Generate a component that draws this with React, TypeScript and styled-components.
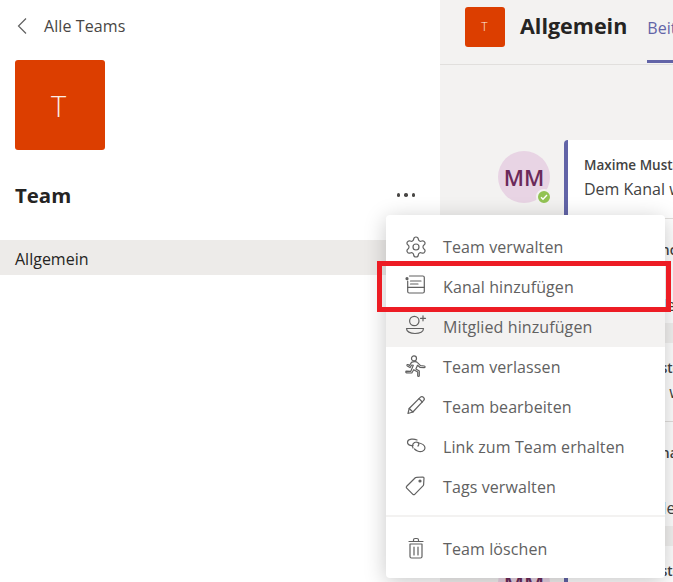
import React from 'react';
import styled, { createGlobalStyle } from 'styled-components';
import { Settings } from 'lucide-react';

const GlobalStyle = createGlobalStyle`
  html, body {
    margin: 0;
    padding: 0;
    overflow: hidden;
    background: #fff;
    font-family: "Open Sans", "Noto Sans", "Liberation Sans", sans-serif;
  }
  * { box-sizing: border-box; }
`;

const Page = styled.div`
  position: relative;
  display: flex;
  width: 673px;
  height: 582px;
  overflow: hidden;
`;

// left column
const Sidebar = styled.aside`
  display: flex;
  flex-direction: column;
  flex: 0 0 440px;
  background: #fff;
`;

const BackRow = styled.div`
  display: flex;
  align-items: center;
  gap: 14px;
  height: 50px;
  padding: 1px 0 0 14px;
  font-size: 16px;
  letter-spacing: 0.1px;
  color: #484644;
`;

const TeamTile = styled.div<{ $size: number; $font: number }>`
  display: flex;
  flex: 0 0 auto;
  align-items: center;
  justify-content: center;
  width: ${p => p.$size}px;
  height: ${p => p.$size}px;
  padding-right: ${p => p.$size / 30}px;
  border-radius: 3px;
  background: #dc3e00;
  color: #fdeee6;
  font-size: ${p => p.$font}px;
  font-weight: 300;
`;

const TileSlot = styled.div`
  padding: 10px 0 0 15px;
`;

const TitleRow = styled.div`
  display: flex;
  align-items: center;
  justify-content: space-between;
  height: 34px;
  margin-top: 28px;
  padding: 0 25px 0 15px;
`;

const TeamName = styled.h1`
  margin: 0;
  font-size: 20.4px;
  font-weight: 700;
  color: #252423;
`;

const Dots = styled.div`
  display: flex;
  gap: 4px;
`;

const Dot = styled.span`
  width: 3.5px;
  height: 3.5px;
  border-radius: 50%;
  background: #484644;
`;

const ChannelRow = styled.div`
  display: flex;
  align-items: center;
  height: 35px;
  margin-top: 28px;
  padding: 2px 0 0 15px;
  background: #edebe9;
  font-size: 16px;
  color: #252423;
`;

// right column
const Main = styled.main`
  flex: 1;
  min-width: 0;
  background: #f3f2f1;
  overflow: hidden;
`;

const Header = styled.header`
  display: flex;
  align-items: center;
  height: 65px;
  padding: 0 0 11px 25px;
  border-bottom: 1px solid #e1dfdd;
`;

const ChannelName = styled.h2`
  margin: -2px 0 0 15px;
  font-size: 21.5px;
  font-weight: 700;
  color: #252423;
`;

const Tab = styled.div`
  position: relative;
  margin: 3px 0 0 20px;
  font-size: 16px;
  white-space: nowrap;
  color: #6264a7;
  &::after {
    content: '';
    position: absolute;
    left: 0;
    right: 0;
    bottom: -24px;
    height: 3px;
    background: #6264a7;
  }
`;

const Feed = styled.div`
  display: flex;
  flex-direction: column;
  gap: 20px;
  width: 600px;
  padding: 75px 0 0 58px;
`;

const Post = styled.article`
  display: flex;
  align-items: flex-start;
  gap: 14px;
`;

const Avatar = styled.div`
  position: relative;
  display: flex;
  flex: 0 0 52px;
  align-items: center;
  justify-content: center;
  height: 52px;
  margin-top: 11px;
  border-radius: 50%;
  background: #e8d4e4;
  color: #6b2a5a;
  font-size: 22px;
  font-weight: 600;
`;

const Presence = styled.span`
  position: absolute;
  right: -2px;
  bottom: -2px;
  display: flex;
  align-items: center;
  justify-content: center;
  width: 16px;
  height: 16px;
  border: 2px solid #f3f2f1;
  border-radius: 50%;
  background: #92c353;
`;

const Card = styled.div`
  flex: 1;
  height: 183px;
  border-left: 4px solid #6264a7;
  border-radius: 4px 0 0 4px;
  background: #fff;
  color: #424242;
  white-space: nowrap;
`;

const Message = styled.div`
  height: 78px;
  padding: 16px 0 0 16px;
`;

const Reply = styled.div`
  height: 105px;
  padding: 22px 0 0 16px;
  border-top: 1px solid #e1dfdd;
`;

const Author = styled.div`
  font-size: 13.5px;
  font-weight: 600;
  line-height: 18px;
`;

const Body = styled.div`
  margin-top: 4px;
  font-size: 16px;
  line-height: 22px;
`;

const Note = styled(Body)`
  margin-top: 35px;
`;

// context menu lying over the page
const Menu = styled.nav`
  position: absolute;
  left: 386px;
  top: 215px;
  width: 279px;
  height: 363px;
  padding-top: 12px;
  border-radius: 4px;
  background: #fff;
  box-shadow: 0 4px 22px rgba(0, 0, 0, 0.22);
`;

const MenuItem = styled.div<{ $hover?: boolean }>`
  display: flex;
  align-items: center;
  gap: 15px;
  height: 40px;
  padding-left: 18px;
  background: ${p => (p.$hover ? '#f3f2f1' : 'transparent')};
  color: #616161;
  font-size: 16px;
  letter-spacing: 0.1px;
`;

const MenuDivider = styled.div`
  height: 2px;
  margin: 8px 0 12px;
  background: #f3f2f1;
`;

const Highlight = styled.div`
  position: absolute;
  left: -9px;
  top: 46px;
  width: 294px;
  height: 51px;
  border: 5px solid #ed1c24;
  pointer-events: none;
`;

const IconSvg = styled.svg.attrs({
  width: 24,
  height: 24,
  viewBox: '0 0 24 24',
  fill: 'none',
  stroke: '#616161',
  strokeWidth: 1.2,
  strokeLinecap: 'round',
  strokeLinejoin: 'round',
})`
  flex: 0 0 24px;
`;

const GearIcon = styled(Settings).attrs({ size: 24, strokeWidth: 1.2, color: '#616161' })`
  flex: 0 0 24px;
`;

const BackSvg = styled.svg`
  flex: 0 0 16px;
`;

const ChannelIcon = () => (
  <IconSvg>
    <path d="M5.5 1h13.3c.8 0 1.5.7 1.5 1.5v14c0 .8-.7 1.5-1.5 1.5H5.2c-.8 0-1.5-.7-1.5-1.5V6" />
    <circle cx="3" cy="3.7" r="1" fill="#616161" />
    <path d="M6.5 6H17M6.5 9H14M3.7 12.3h16.6" />
  </IconSvg>
);

const MemberIcon = () => (
  <IconSvg>
    <circle cx="10.3" cy="6" r="4.7" />
    <path d="M19 .8v5M16.5 3.3h5" />
    <path d="M2.5 13.5h17c0 3-3.5 5-8.5 5s-8.5-2-8.5-5z" />
  </IconSvg>
);

const RunnerIcon = () => (
  <IconSvg>
    <circle cx="10" cy="3.4" r="2.5" />
    <path d="M7.5 7.4c2-1 5-.9 6 .2l3 3.1 3.8.3c1.1.1 1 1.7 0 1.6l-4.4-.3-2.4-2-1.6 3.6 3.4 2.2v4.6c0 1-1.6 1-1.6 0v-3.7l-4-2.3-1.9 3.3-5.3-.2c-1 0-1-1.6 0-1.6l4.3.1 2.5-6-1.6-.3-1.7 2.6-2.7-1.6c-.9-.6-.1-1.9.7-1.4l1.5.9z" />
  </IconSvg>
);

const PencilIcon = () => (
  <IconSvg>
    <path d="M4 18.5l1.2-5L16.5 2.2c.8-.8 2-.8 3 .2s1 2.2.2 3L8.9 17z" />
    <path d="M5.2 13.5l3.7 3.5M15 3.7l3.3 3.3" />
  </IconSvg>
);

const LinkIcon = () => (
  <IconSvg>
    <path d="M13 5C10 3.5 4 3.5 3.5 7 3.2 9.5 6 11 9 10.5" />
    <path d="M9 13C7.5 10 9.5 7 12.5 7 15 7 15.5 9.5 14 11" />
    <path d="M13 7.5c3 .5 8 2 8 5.5 0 3-4 4.5-7.5 3-1.5-.6-2.5-1.5-3-2" />
  </IconSvg>
);

const TagIcon = () => (
  <IconSvg>
    <path d="M2.7 11.3l8.6-8.5c.3-.3.7-.4 1-.4l6.7-.4c.6 0 1 .4 1 1l-.4 6.7c0 .4-.2.7-.4 1l-8.5 8.6c-.5.5-1.3.5-1.8 0l-6.2-6.2c-.5-.5-.5-1.3 0-1.8z" />
    <circle cx="16" cy="6" r="1" fill="#616161" />
  </IconSvg>
);

const TrashIcon = () => (
  <IconSvg>
    <path d="M5 4.5h14M9.5 4.5V3c0-.8.6-1.5 1.5-1.5h2c.9 0 1.5.7 1.5 1.5v1.5" />
    <path d="M6 7v12.5c0 .8.7 1.5 1.5 1.5h9c.8 0 1.5-.7 1.5-1.5V7z" />
    <path d="M10 10v8M14 10v8" />
  </IconSvg>
);

const BackIcon = () => (
  <BackSvg width="16" height="20" viewBox="0 0 16 20" fill="none" stroke="#616161" strokeWidth="1.2">
    <path d="M12 2.5L4.5 10l7.500 7.500" />
  </BackSvg>
);

const posts = [
  { reply: 'Michael Schnorr', note: 'Hallo an alle' },
  { reply: 'Michael Schnabel', note: 'Hallo an alle' },
  { reply: '', note: '' },
];

export default function App() {
  return (
    <Page>
      <GlobalStyle />
      <Sidebar>
        <BackRow>
          <BackIcon />
          Alle Teams
        </BackRow>
        <TileSlot>
          <TeamTile $size={90} $font={29}>T</TeamTile>
        </TileSlot>
        <TitleRow>
          <TeamName>Team</TeamName>
          <Dots>
            <Dot />
            <Dot />
            <Dot />
          </Dots>
        </TitleRow>
        <ChannelRow>Allgemein</ChannelRow>
      </Sidebar>

      <Main>
        <Header>
          <TeamTile $size={40} $font={12}>T</TeamTile>
          <ChannelName>Allgemein</ChannelName>
          <Tab>Beiträge</Tab>
        </Header>
        <Feed>
          {posts.map((post, i) => (
            <Post key={i}>
              <Avatar>
                MM
                <Presence>
                  <svg width="8" height="8" viewBox="0 0 8 8" fill="none" stroke="#fff" strokeWidth="1.4">
                    <path d="M1 4.2l2 2 4-4.2" />
                  </svg>
                </Presence>
              </Avatar>
              <Card>
                <Message>
                  <Author>Maxime Musterfrau</Author>
                  <Body>Dem Kanal wurde ein neuer Beitrag</Body>
                </Message>
                <Reply>
                  <Author>{post.reply}</Author>
                  <Note>{post.note}</Note>
                </Reply>
              </Card>
            </Post>
          ))}
        </Feed>
      </Main>

      <Menu>
        <MenuItem><GearIcon />Team verwalten</MenuItem>
        <MenuItem><ChannelIcon />Kanal hinzufügen</MenuItem>
        <MenuItem $hover><MemberIcon />Mitglied hinzufügen</MenuItem>
        <MenuItem><RunnerIcon />Team verlassen</MenuItem>
        <MenuItem><PencilIcon />Team bearbeiten</MenuItem>
        <MenuItem><LinkIcon />Link zum Team erhalten</MenuItem>
        <MenuItem><TagIcon />Tags verwalten</MenuItem>
        <MenuDivider />
        <MenuItem><TrashIcon />Team löschen</MenuItem>
        <Highlight />
      </Menu>
    </Page>
  );
}
